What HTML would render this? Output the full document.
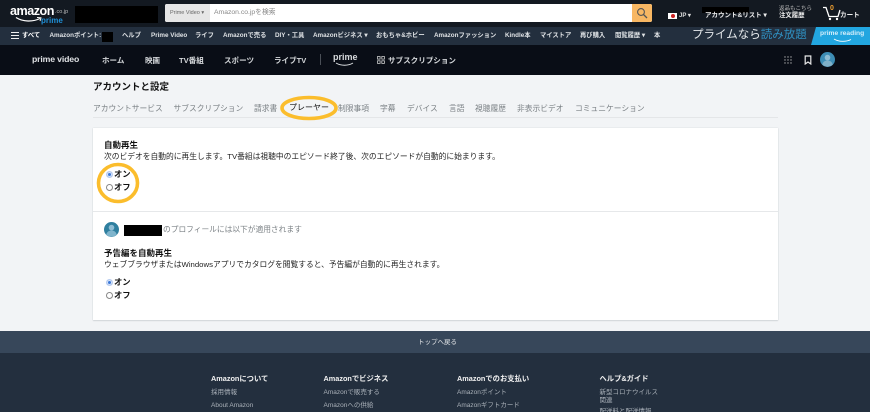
<!DOCTYPE html>
<html lang="ja">
<head>
<meta charset="utf-8">
<title>アカウントと設定</title>
<style>
html,body{margin:0;padding:0;width:870px;height:412px;overflow:hidden;background:#f2f4f6}
body{position:relative;font-family:"Liberation Sans","Noto Sans CJK JP",sans-serif;color:#111;filter:blur(.35px)}
.a{position:absolute;white-space:nowrap;line-height:1}
.b{position:absolute}
.w{color:#fff}
.n{font-size:6.3px;color:#dfe2e5;font-weight:700;top:33px}
.p{font-size:7.55px;color:#d4d7da;font-weight:700;top:56.5px}
.t{font-size:7.75px;color:#7b8185;top:104.5px}
.f{font-size:6.5px;color:#a9b0b8}
.fh{font-size:7.3px;color:#f2f2f2;font-weight:700;top:375px}
.r{position:absolute;width:5px;height:5px;border-radius:50%;background:#fff;border:.8px solid #888;left:105.5px}
.r.on{background:#3b78d8;border-color:#b8cdf0;box-shadow:inset 0 0 0 1px #dfe9fa}
.l{font-size:8.3px;font-weight:700;color:#111;left:114px}
.h{font-size:8.5px;font-weight:700;color:#111;left:104px}
.d{font-size:7.75px;color:#222;left:104px}
</style>
</head>
<body>
<div class="b" style="left:0;top:0;width:870px;height:27px;background:#131921"></div>
<div class="b" style="left:0;top:27px;width:870px;height:18px;background:#232f3e"></div>
<div class="b" style="left:0;top:45px;width:870px;height:30px;background:#090d16"></div>

<div class="a w" style="left:10px;top:5px;font-size:12.6px;font-weight:700;letter-spacing:-.5px">amazon</div>
<div class="a" style="left:55px;top:10px;font-size:5.5px;color:#bbb">.co.jp</div>
<div class="a" style="left:41px;top:16.5px;font-size:8px;font-weight:700;color:#1f8fd6">prime</div>
<svg class="b" style="left:15px;top:16px" width="28" height="8" viewBox="0 0 28 8"><path d="M1 1.5C8 6 18 6 25 2.5" fill="none" stroke="#fff" stroke-width="1.2"/><path d="M22 1.5l4 .3-1 3.2" fill="none" stroke="#fff" stroke-width=".9"/></svg>
<div class="b" style="left:75px;top:6px;width:83px;height:17px;background:#000"></div>

<div class="b" style="left:165px;top:4px;width:487px;height:18px;background:#fff;border-radius:2px"></div>
<div class="b" style="left:165px;top:4px;width:45px;height:18px;background:#e6e6e6;border-radius:2px 0 0 2px"></div>
<div class="a" style="left:170px;top:11px;font-size:5.5px;color:#666">Prime Video ▾</div>
<div class="a" style="left:214px;top:9.5px;font-size:6.8px;color:#888">Amazon.co.jpを検索</div>
<div class="b" style="left:632px;top:4px;width:20px;height:18px;background:#f8b763;border-radius:0 2px 2px 0"></div>
<svg class="b" style="left:636px;top:7px" width="12" height="12" viewBox="0 0 12 12"><circle cx="5" cy="5" r="3.4" fill="none" stroke="#555" stroke-width="1.1"/><path d="M7.5 7.5L11 11" stroke="#555" stroke-width="1.3"/></svg>

<div class="b" style="left:668px;top:13px;width:9px;height:6px;background:#fff"></div>
<div class="b" style="left:670.5px;top:14px;width:4px;height:4px;border-radius:50%;background:#c22"></div>
<div class="a" style="left:679px;top:13px;font-size:6px;color:#ddd;font-weight:700">JP ▾</div>
<div class="b" style="left:702px;top:7px;width:47px;height:6px;background:#000"></div>
<div class="a" style="left:705px;top:13px;font-size:6.5px;color:#eee;font-weight:700">アカウント&amp;リスト ▾</div>
<div class="a" style="left:779px;top:7px;font-size:5.5px;color:#bbb">返品もこちら</div>
<div class="a" style="left:779px;top:13px;font-size:6.4px;color:#eee;font-weight:700">注文履歴</div>
<svg class="b" style="left:822px;top:5px" width="20" height="16" viewBox="0 0 20 16"><path d="M1 2.5h3l3 9h9l2-6.5" fill="none" stroke="#fff" stroke-width="1.3"/><circle cx="8" cy="14" r="1.2" fill="#fff"/><circle cx="15" cy="14" r="1.2" fill="#fff"/></svg>
<div class="a" style="left:830px;top:5px;font-size:7px;color:#f0a030;font-weight:700">0</div>
<div class="a" style="left:840px;top:13px;font-size:6.6px;color:#eee;font-weight:700">カート</div>

<svg class="b" style="left:10px;top:31px" width="10" height="9" viewBox="0 0 10 9"><path d="M1 1.5h8M1 4.5h8M1 7.5h8" stroke="#eee" stroke-width="1.1"/></svg>
<div class="a n" style="left:22px;color:#fff">すべて</div>
<div class="a n" style="left:49.5px">Amazonポイント:</div>
<div class="b" style="left:102px;top:32px;width:11px;height:10px;background:#000"></div>
<div class="a n" style="left:122px">ヘルプ</div>
<div class="a n" style="left:151px">Prime Video</div>
<div class="a n" style="left:195px">ライフ</div>
<div class="a n" style="left:223px">Amazonで売る</div>
<div class="a n" style="left:275px">DIY・工具</div>
<div class="a n" style="left:313px">Amazonビジネス ▾</div>
<div class="a n" style="left:376px">おもちゃ&amp;ホビー</div>
<div class="a n" style="left:434px">Amazonファッション</div>
<div class="a n" style="left:505px">Kindle本</div>
<div class="a n" style="left:540px">マイストア</div>
<div class="a n" style="left:580px">再び購入</div>
<div class="a n" style="left:615px">閲覧履歴 ▾</div>
<div class="a n" style="left:654px">本</div>
<div class="a" style="left:692px;top:29.5px;font-size:11.5px;color:#e6e9ec">プライムなら<span style="color:#2f8fc0">読み放題</span></div>
<div class="b" style="left:811px;top:27px;width:59px;height:18px;background:#22a6e0;clip-path:polygon(5px 0,100% 0,100% 100%,0 100%)"></div>
<div class="a" style="left:820px;top:30.5px;font-size:6.7px;font-weight:700;color:#d4eefa">prime reading</div>
<svg class="b" style="left:833px;top:38px" width="20" height="5" viewBox="0 0 20 5"><path d="M1 1C6 4 13 4 18 1.5" fill="none" stroke="#fff" stroke-width=".9"/></svg>

<div class="a" style="left:32px;top:55px;font-size:8.7px;font-weight:700;color:#e0e2e5;letter-spacing:-.15px">prime video</div>
<div class="a p" style="left:102px">ホーム</div>
<div class="a p" style="left:145px">映画</div>
<div class="a p" style="left:179px">TV番組</div>
<div class="a p" style="left:224px">スポーツ</div>
<div class="a p" style="left:274px">ライブTV</div>
<div class="b" style="left:320px;top:54px;width:1px;height:11px;background:#4a4f57"></div>
<div class="a" style="left:333px;top:53px;font-size:9px;font-weight:700;color:#d8dbde">prime</div>
<svg class="b" style="left:335px;top:62px" width="20" height="5" viewBox="0 0 20 5"><path d="M1 1C6 4 13 4 18 1" fill="none" stroke="#dfe2e5" stroke-width="1"/></svg>
<svg class="b" style="left:377px;top:56px" width="8" height="8" viewBox="0 0 8 8"><g fill="none" stroke="#ccc" stroke-width=".8"><rect x=".5" y=".5" width="2.6" height="2.6"/><rect x="4.8" y=".5" width="2.6" height="2.6"/><rect x=".5" y="4.8" width="2.6" height="2.6"/><rect x="4.8" y="4.8" width="2.6" height="2.6"/></g></svg>
<div class="a p" style="left:388px">サブスクリプション</div>
<svg class="b" style="left:784px;top:56px" width="8" height="8" viewBox="0 0 8 8"><g fill="#aaa"><circle cx="1" cy="1" r=".7"/><circle cx="4" cy="1" r=".7"/><circle cx="7" cy="1" r=".7"/><circle cx="1" cy="4" r=".7"/><circle cx="4" cy="4" r=".7"/><circle cx="7" cy="4" r=".7"/><circle cx="1" cy="7" r=".7"/><circle cx="4" cy="7" r=".7"/><circle cx="7" cy="7" r=".7"/></g></svg>
<svg class="b" style="left:804px;top:55px" width="8" height="10" viewBox="0 0 8 10"><path d="M1.2 1h5.6v8L4 7 1.2 9z" fill="none" stroke="#e8e8e8" stroke-width="1.2"/></svg>
<svg class="b" style="left:820px;top:52px" width="15" height="15" viewBox="0 0 15 15"><circle cx="7.5" cy="7.5" r="7.5" fill="#3d8db5"/><circle cx="7.5" cy="5.6" r="2.8" fill="#8fbdd4"/><path d="M2.2 12.5c1-3 3-4 5.3-4s4.3 1 5.3 4a7.5 7.5 0 0 1-10.6 0z" fill="#7fb0c8"/></svg>

<div class="a" style="left:93px;top:83px;font-size:9.5px;font-weight:700;color:#111">アカウントと設定</div>
<div class="a t" style="left:93px">アカウントサービス</div>
<div class="a t" style="left:173.5px">サブスクリプション</div>
<div class="a t" style="left:254px">請求書</div>
<div class="a" style="left:289px;top:104px;font-size:8px;color:#111">プレーヤー</div>
<div class="a t" style="left:338px">制限事項</div>
<div class="a t" style="left:380px">字幕</div>
<div class="a t" style="left:407px">デバイス</div>
<div class="a t" style="left:449px">言語</div>
<div class="a t" style="left:475px">視聴履歴</div>
<div class="a t" style="left:517px">非表示ビデオ</div>
<div class="a t" style="left:575px">コミュニケーション</div>
<div class="b" style="left:93px;top:117px;width:685px;height:1px;background:#e4e6e8"></div>

<div class="b" style="left:93px;top:128px;width:685px;height:191.5px;background:#fff;box-shadow:0 0 1px #c8ccd0,0 1px 1px #d4d7da"></div>
<div class="a h" style="top:141px">自動再生</div>
<div class="a d" style="top:152.5px">次のビデオを自動的に再生します。TV番組は視聴中のエピソード終了後、次のエピソードが自動的に始まります。</div>
<div class="r on" style="top:171px"></div>
<div class="a l" style="top:170px">オン</div>
<div class="r" style="top:184px"></div>
<div class="a l" style="top:183px">オフ</div>
<div class="b" style="left:93px;top:211px;width:685px;height:1px;background:#e6e8ea"></div>

<svg class="b" style="left:104px;top:222px" width="15" height="15" viewBox="0 0 15 15"><circle cx="7.5" cy="7.5" r="7.5" fill="#2f7f9f"/><circle cx="7.5" cy="5.6" r="2.8" fill="#8fbdd4"/><path d="M2.2 12.5c1-3 3-4 5.3-4s4.3 1 5.3 4a7.5 7.5 0 0 1-10.6 0z" fill="#7fb4cc"/></svg>
<div class="b" style="left:124px;top:225px;width:38px;height:11px;background:#000"></div>
<div class="a" style="left:163px;top:226px;font-size:7.72px;color:#7b8185">のプロフィールには以下が適用されます</div>
<div class="a h" style="top:249px">予告編を自動再生</div>
<div class="a d" style="top:260.5px">ウェブブラウザまたはWindowsアプリでカタログを閲覧すると、予告編が自動的に再生されます。</div>
<div class="r on" style="top:279px"></div>
<div class="a l" style="top:278px">オン</div>
<div class="r" style="top:292px"></div>
<div class="a l" style="top:291px">オフ</div>

<svg class="b" style="left:0;top:0" width="870" height="412" viewBox="0 0 870 412"><ellipse cx="309" cy="108" rx="27" ry="10.5" fill="none" stroke="#fbbd2c" stroke-width="3.6"/><ellipse cx="118" cy="183" rx="19.5" ry="18.5" fill="none" stroke="#fbbd2c" stroke-width="3.6"/></svg>

<div class="b" style="left:0;top:331px;width:870px;height:22px;background:#37475a"></div>
<div class="a" style="left:418px;top:339.5px;font-size:6.5px;color:#e4e6e8">トップへ戻る</div>
<div class="b" style="left:0;top:353px;width:870px;height:59px;background:#232f3e"></div>
<div class="a fh" style="left:211px">Amazonについて</div>
<div class="a f" style="left:211px;top:389.5px">採用情報</div>
<div class="a f" style="left:211px;top:402.5px">About Amazon</div>
<div class="a fh" style="left:323.5px">Amazonでビジネス</div>
<div class="a f" style="left:323.5px;top:389.5px">Amazonで販売する</div>
<div class="a f" style="left:323.5px;top:402.5px">Amazonへの供給</div>
<div class="a fh" style="left:457px">Amazonでのお支払い</div>
<div class="a f" style="left:457px;top:389.5px">Amazonポイント</div>
<div class="a f" style="left:457px;top:402.5px">Amazonギフトカード</div>
<div class="a fh" style="left:599.5px">ヘルプ&amp;ガイド</div>
<div class="a f" style="left:599.5px;top:389.5px">新型コロナウイルス</div>
<div class="a f" style="left:599.5px;top:397.5px">関連</div>
<div class="a f" style="left:599.5px;top:409px">配送料と配送情報</div>
</body>
</html>
